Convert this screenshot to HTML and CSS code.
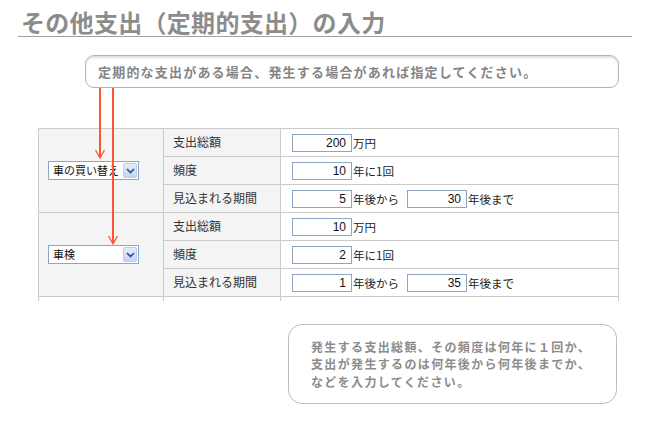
FILE: index.html
```html
<!DOCTYPE html>
<html lang="ja">
<head>
<meta charset="utf-8">
<link rel="stylesheet" href="styles.css">
</head>
<body>
<div class="page">
  <h1 class="title">その他支出（定期的支出）の入力</h1>
  <div class="callout-top">定期的な支出がある場合、発生する場合があれば指定してください。</div>

  <table class="grid">
    <colgroup><col class="c1"><col class="c2"><col class="c3"></colgroup>
    <tbody class="group">
      <tr>
        <td class="sel-cell" rowspan="3">
          <div class="select"><span class="sel-text">車の買い替え</span><span class="sel-btn"><svg width="9" height="6" viewBox="0 0 9 6"><path d="M1 1 L4.5 4.5 L8 1" fill="none" stroke="#2a4d8f" stroke-width="1.6"/></svg></span></div>
        </td>
        <td class="lbl">支出総額</td>
        <td class="val"><span class="inp">200</span><span class="unit">万円</span></td>
      </tr>
      <tr>
        <td class="lbl">頻度</td>
        <td class="val"><span class="inp">10</span><span class="unit">年に1回</span></td>
      </tr>
      <tr>
        <td class="lbl">見込まれる期間</td>
        <td class="val"><span class="inp">5</span><span class="unit">年後から</span><span class="inp inp2">30</span><span class="unit">年後まで</span></td>
      </tr>
    </tbody>
    <tbody class="group">
      <tr>
        <td class="sel-cell" rowspan="3">
          <div class="select"><span class="sel-text">車検</span><span class="sel-btn"><svg width="9" height="6" viewBox="0 0 9 6"><path d="M1 1 L4.5 4.5 L8 1" fill="none" stroke="#2a4d8f" stroke-width="1.6"/></svg></span></div>
        </td>
        <td class="lbl">支出総額</td>
        <td class="val"><span class="inp">10</span><span class="unit">万円</span></td>
      </tr>
      <tr>
        <td class="lbl">頻度</td>
        <td class="val"><span class="inp">2</span><span class="unit">年に1回</span></td>
      </tr>
      <tr>
        <td class="lbl">見込まれる期間</td>
        <td class="val"><span class="inp">1</span><span class="unit">年後から</span><span class="inp inp2">35</span><span class="unit">年後まで</span></td>
      </tr>
    </tbody>
    <tbody class="tail">
      <tr><td></td><td></td><td></td></tr>
    </tbody>
  </table>

  <div class="callout-bottom">
    <p class="cl">発生する支出総額、その頻度は何年に１回か、</p>
    <p class="cl">支出が発生するのは何年後から何年後までか、</p>
    <p class="cl">などを入力してください。</p>
  </div>

  <svg class="arrows" width="650" height="430" viewBox="0 0 650 430">
    <g fill="none" stroke="#ff5530" stroke-width="2">
      <line x1="100" y1="88" x2="100" y2="157"/>
      <polyline points="95.5,150 100,158 104.5,150" stroke-width="1.3"/>
      <line x1="113" y1="88" x2="113" y2="243"/>
      <polyline points="108.5,236 113,244 117.5,236" stroke-width="1.3"/>
    </g>
  </svg>
</div>
</body>
</html>
```

FILE: styles.css
```css
html, body {
  margin: 0;
  padding: 0;
  background: #fff;
}
body {
  font-family: "Noto Sans CJK JP", "Liberation Sans", sans-serif;
  color: #222;
}
.page {
  position: relative;
  width: 650px;
  height: 430px;
  overflow: hidden;
  padding-top: 8px;
  box-sizing: border-box;
}
.title {
  margin: 0 18px 0 18px;
  padding: 0 0 0 3px;
  height: 28px;
  line-height: 28px;
  font-size: 24px;
  font-weight: bold;
  color: #8c8c8c;
  border-bottom: 1px solid #a0a0a0;
  letter-spacing: 0.3px;
}
.callout-top {
  margin: 18px 0 0 85px;
  width: 534px;
  height: 33px;
  box-sizing: border-box;
  border: 1px solid #b4b4b4;
  border-radius: 9px;
  box-shadow: inset 0 2px 2px rgba(0,0,0,0.12);
  padding: 0 0 0 12px;
  line-height: 31px;
  font-size: 13px;
  font-weight: bold;
  color: #858585;
  letter-spacing: 1.2px;
}
.grid {
  margin: 40px 0 0 38px;
  width: 580px;
  border-collapse: collapse;
  table-layout: fixed;
  font-size: 12px;
}
.c1 { width: 125px; }
.c2 { width: 117px; }
.c3 { width: 338px; }
.grid td {
  border: 1px solid #cbcbcb;
  height: 28px;
  padding: 0;
  box-sizing: border-box;
  vertical-align: middle;
}
.sel-cell {
  background: #f4f4f4;
  padding-left: 9px !important;
}
.lbl {
  background: #f4f4f4;
  padding-left: 9px !important;
  color: #333;
  padding-bottom: 2px !important;
}
.val {
  background: #fff;
  padding-left: 11px !important;
  color: #222;
}
.val, .val * { vertical-align: middle; }
.inp {
  display: inline-block;
  width: 60px;
  height: 18px;
  box-sizing: border-box;
  border: 1px solid #8ea6c5;
  text-align: right;
  padding-right: 5px;
  font-family: "Liberation Sans", sans-serif;
  font-size: 12px;
  line-height: 16px;
  color: #111;
  background: #fff;
}
.inp2 { margin-left: 8px; }
.unit {
  margin-left: 1px;
  font-size: 11.5px;
  color: #222;
}
.select {
  display: flex;
  align-items: center;
  width: 91px;
  height: 19px;
  box-sizing: border-box;
  border: 1px solid #8ea6c5;
  background: #fff;
  padding: 1px;
}
.sel-text {
  flex: 1;
  min-width: 0;
  padding-left: 3px;
  font-size: 11px;
  line-height: 15px;
  color: #111;
  white-space: nowrap;
}
.sel-btn {
  flex: none;
  width: 14px;
  height: 15px;
  box-sizing: border-box;
  border: 1px solid #b8cdf0;
  border-radius: 2px;
  background: linear-gradient(#e4ecfb, #c4d4f3);
  display: flex;
  align-items: center;
  justify-content: center;
}
.tail td {
  height: 4px;
  border-bottom: none;
  border-top: 1px solid #cbcbcb;
  background: #fff;
}
.tail td:nth-child(2) { border-left: 1px solid #cbcbcb; }
.tail td:nth-child(3) { border-left: 1px solid #cbcbcb; border-right: 1px solid #cbcbcb; }
.callout-bottom {
  margin: 23px 0 0 288px;
  width: 329px;
  height: 80px;
  box-sizing: border-box;
  border: 1px solid #bdbdbd;
  border-radius: 14px;
  padding: 13px 0 0 22px;
  display: flex;
  flex-direction: column;
}
.cl {
  margin: 0;
  height: 17.5px;
  font-size: 12px;
  line-height: 17.5px;
  font-weight: bold;
  color: #8c8c8c;
  letter-spacing: 1.35px;
  white-space: nowrap;
}
.arrows {
  position: absolute;
  left: 0;
  top: 0;
  pointer-events: none;
}
```
